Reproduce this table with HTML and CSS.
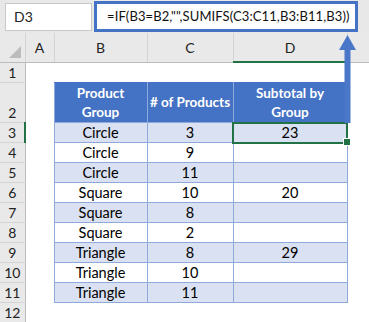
FILE: index.html
```html
<!DOCTYPE html>
<html lang="en">

<head>
    <meta charset="UTF-8">
    <meta name="viewport" content="width=device-width, initial-scale=1.0">
    <title>Subtotal by Group - SUMIFS</title>
    <link rel="stylesheet" href="styles.css">
</head>

<body>
    <!-- Name box and formula bar -->
    <div class="formula-bar">
        <div class="name-box">D3</div>
        <div class="formula-box">=IF(B3=B2,"",SUMIFS(C3:C11,B3:B11,B3))</div>
    </div>

    <!-- Sheet -->
    <div class="sheet">
        <table class="grid">
            <colgroup>
                <col class="c-row">
                <col class="c-a">
                <col class="c-b">
                <col class="c-c">
                <col class="c-d">
                <col class="c-e">
            </colgroup>
            <tr class="col-heads">
                <th class="corner"><span class="corner-mark"></span></th>
                <th>A</th>
                <th>B</th>
                <th>C</th>
                <th class="active-col">D</th>
                <th></th>
            </tr>
            <tr>
                <th class="row-head">1</th>
                <td></td><td></td><td></td><td></td><td></td>
            </tr>
            <tr class="tall">
                <th class="row-head">2</th>
                <td></td>
                <td class="t-head">Product<br>Group</td>
                <td class="t-head">#&nbsp;of&nbsp;Products</td>
                <td class="t-head">Subtotal by<br>Group</td>
                <td></td>
            </tr>
            <tr class="band">
                <th class="row-head active-row">3</th>
                <td></td><td class="t-cell">Circle</td><td class="t-cell">3</td><td class="t-cell selected">23</td><td></td>
            </tr>
            <tr>
                <th class="row-head">4</th>
                <td></td><td class="t-cell">Circle</td><td class="t-cell">9</td><td class="t-cell"></td><td></td>
            </tr>
            <tr class="band">
                <th class="row-head">5</th>
                <td></td><td class="t-cell">Circle</td><td class="t-cell">11</td><td class="t-cell"></td><td></td>
            </tr>
            <tr>
                <th class="row-head">6</th>
                <td></td><td class="t-cell">Square</td><td class="t-cell">10</td><td class="t-cell">20</td><td></td>
            </tr>
            <tr class="band">
                <th class="row-head">7</th>
                <td></td><td class="t-cell">Square</td><td class="t-cell">8</td><td class="t-cell"></td><td></td>
            </tr>
            <tr>
                <th class="row-head">8</th>
                <td></td><td class="t-cell">Square</td><td class="t-cell">2</td><td class="t-cell"></td><td></td>
            </tr>
            <tr class="band">
                <th class="row-head">9</th>
                <td></td><td class="t-cell">Triangle</td><td class="t-cell">8</td><td class="t-cell">29</td><td></td>
            </tr>
            <tr>
                <th class="row-head">10</th>
                <td></td><td class="t-cell">Triangle</td><td class="t-cell">10</td><td class="t-cell"></td><td></td>
            </tr>
            <tr class="band">
                <th class="row-head">11</th>
                <td></td><td class="t-cell">Triangle</td><td class="t-cell">11</td><td class="t-cell"></td><td></td>
            </tr>
            <tr>
                <th class="row-head">12</th>
                <td></td><td></td><td></td><td></td><td></td>
            </tr>
        </table>

        <!-- Callout arrow from formula to D3 -->
        <svg class="arrow" width="17" height="88" viewBox="0 0 17 88">
            <polygon points="8.5,0 17,15 11.5,15 11.5,88 5.5,88 5.5,15 0,15" fill="#4a77c8"/>
        </svg>
    </div>
</body>

</html>
```

FILE: styles.css
```css
/* Base styles */
body {
    margin: 0;
    font-family: Lato, "Open Sans", sans-serif;
    color: #000;
    background: #fff;
    width: 369px;
    height: 322px;
    overflow: hidden;
}

/* Formula bar */
.formula-bar {
    display: flex;
    align-items: center;
    height: 33px;
    background: #e8e8e8;
    gap: 2px;
}

.name-box {
    box-sizing: border-box;
    margin-left: 5px;
    width: 87px;
    height: 28px;
    background: #fff;
    border: 1px solid #c8c8c8;
    padding-left: 8px;
    font-size: 14px;
    line-height: 26px;
    color: #222;
}

.formula-box {
    box-sizing: border-box;
    width: 264px;
    height: 31px;
    background: #fff;
    border: 3px solid #4472c4;
    padding-left: 10px;
    font-size: 13px;
    letter-spacing: 0.1px;
    line-height: 25px;
    white-space: nowrap;
    overflow: hidden;
    color: #111;
}

/* Sheet grid */
.sheet {
    position: relative;
}

.grid {
    table-layout: fixed;
    border-collapse: collapse;
    width: 369px;
    font-size: 14.5px;
}

.c-row { width: 25px; }
.c-a { width: 29px; }
.c-b { width: 93px; }
.c-c { width: 86px; }
.c-d { width: 114px; }
.c-e { width: 22px; }

.grid td,
.grid th {
    padding: 0;
    height: 19px;
    line-height: 19px;
    text-align: center;
    font-weight: normal;
    white-space: nowrap;
}

.col-heads th {
    height: 28px;
    background: #e9e9e9;
    color: #222;
    border-right: 1px solid #d4d4d4;
    border-bottom: 1px solid #bcbcbc;
    font-size: 14px;
}

.col-heads .active-col {
    border-bottom: 2px solid #217346;
}

.corner {
    position: relative;
}

.corner-mark {
    position: absolute;
    right: 4px;
    bottom: 4px;
    width: 0;
    height: 0;
    border-left: 12px solid transparent;
    border-bottom: 12px solid #bcbcbc;
}

.row-head {
    background: #e9e9e9;
    color: #222;
    font-size: 14px;
    vertical-align: bottom;
    border-right: 1px solid #bcbcbc;
    border-bottom: 1px solid #d4d4d4;
}

.row-head.active-row {
    border-right: 2px solid #217346;
}

.tall td,
.tall th {
    height: 39px;
}

/* Data table */
.grid .t-head {
    background: #4472c4;
    color: #fff;
    font-weight: bold;
    font-size: 13.5px;
    line-height: 19px;
    border: 1px solid #8eaadb;
    border-top: 1px solid #4472c4;
}

.t-cell {
    border: 1px solid #8eaadb;
}

.band .t-cell {
    background: #d9e1f2;
}

.selected {
    position: relative;
    outline: 2px solid #217346;
    outline-offset: -1px;
}

.selected::after {
    content: "";
    position: absolute;
    right: -4px;
    bottom: -4px;
    width: 6px;
    height: 6px;
    background: #217346;
    border: 1px solid #fff;
}

.arrow {
    position: absolute;
    left: 339px;
    top: 2px;
}
```
